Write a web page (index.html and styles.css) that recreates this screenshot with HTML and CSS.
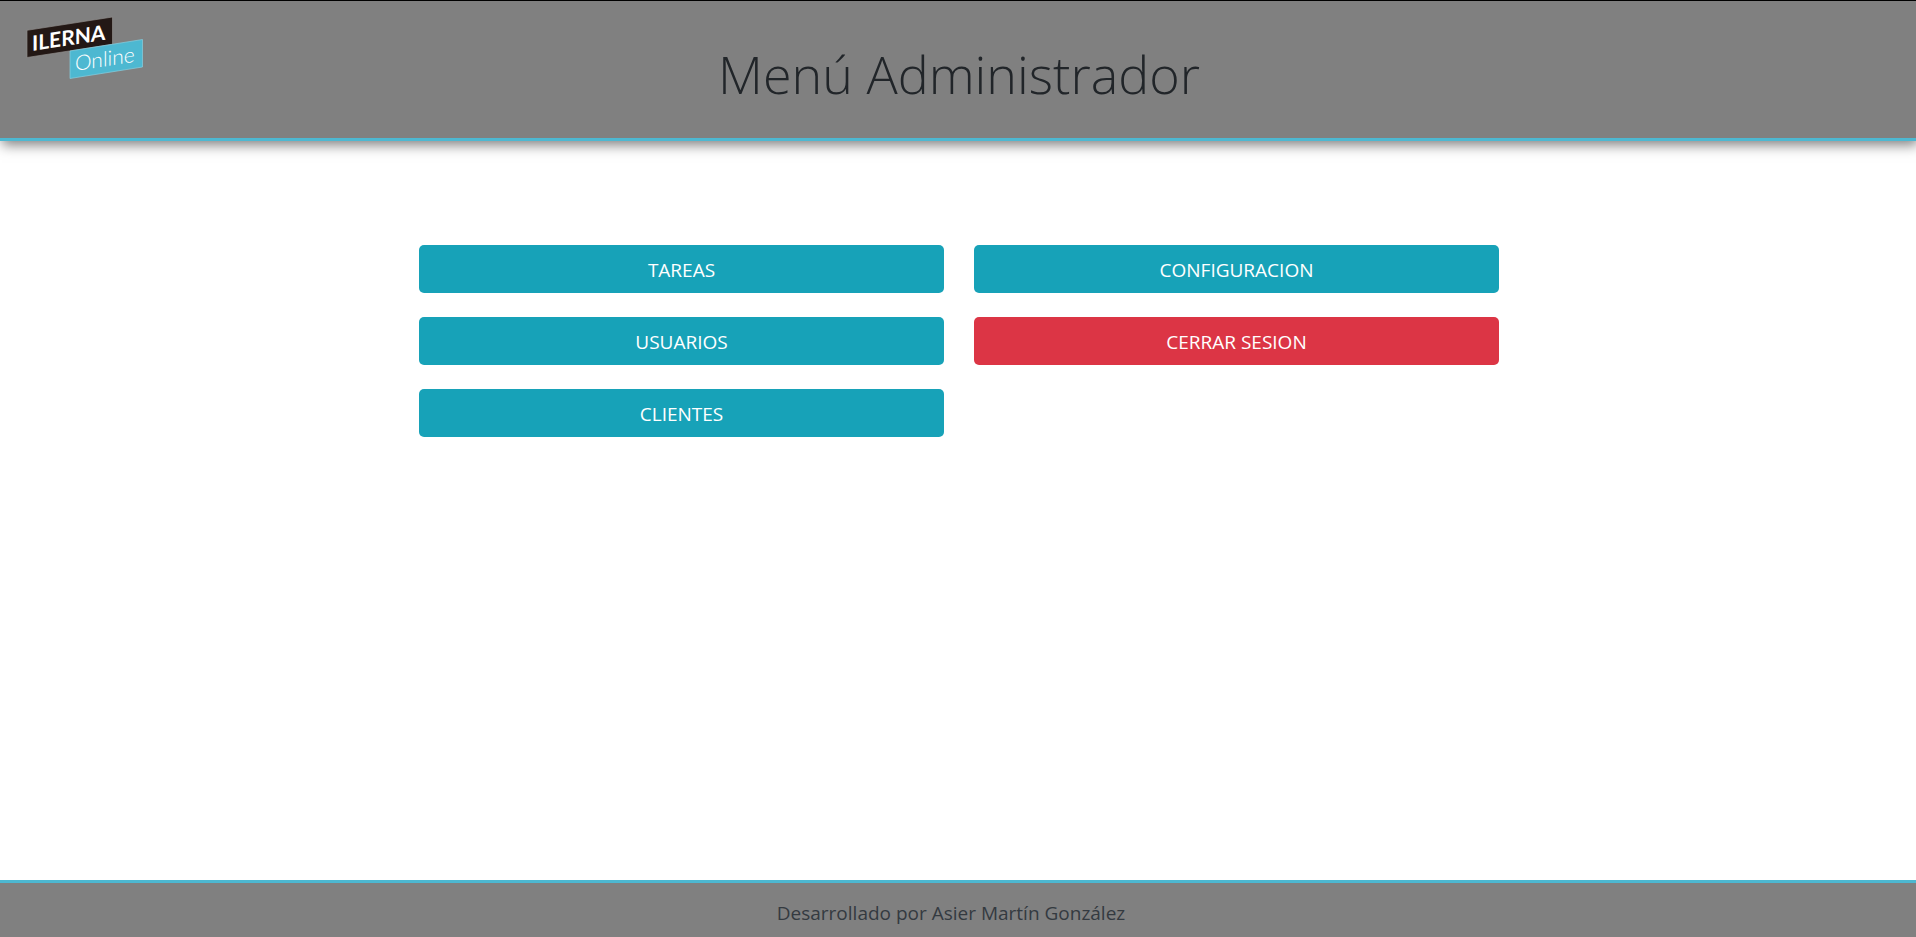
FILE: index.html
```html
<!DOCTYPE html>
<html lang="es">
<head>
<meta charset="utf-8">
<meta name="viewport" content="width=device-width, initial-scale=1">
<title>Menú Administrador</title>
<link rel="stylesheet" href="styles.css">
</head>
<body>
<header class="header">
  <svg class="logo" width="118" height="64" viewBox="26 16 118 64" role="img" aria-label="ILERNA Online">
    <path d="M27 30.3L112.5 17V44.3L27 57.5Z" fill="#231815" stroke="#8f8c8b" stroke-width=".7"/>
    <path d="M70 51L142.5 39.5V67L70 78.5Z" fill="#4db8d1" stroke="#86cfdf" stroke-width=".7"/>
    <g transform="translate(32 51) skewY(-8.8)"><text class="logo-name" x="0" y="0">ILERNA</text></g>
    <g transform="translate(75 71) skewY(-8.8)"><text class="logo-sub" x="0" y="0">Online</text></g>
  </svg>
  <h1 class="title">Menú Administrador</h1>
</header>
<main class="main">
  <nav class="menu">
    <div class="menu-column">
      <button class="btn" type="button">TAREAS</button>
      <button class="btn" type="button">USUARIOS</button>
      <button class="btn" type="button">CLIENTES</button>
    </div>
    <div class="menu-column">
      <button class="btn" type="button">CONFIGURACION</button>
      <button class="btn btn-danger" type="button">CERRAR SESION</button>
    </div>
  </nav>
</main>
<footer class="footer">Desarrollado por Asier Martín González</footer>
</body>
</html>
```
FILE: styles.css
```css
* {
  box-sizing: border-box;
}

body {
  margin: 0;
  min-height: 100vh;
  display: flex;
  flex-direction: column;
  background: #fff;
  color: #212529;
  font-family: "Segoe UI", "Open Sans", "Noto Sans", sans-serif;
}

.header {
  display: grid;
  grid-template-columns: 1fr auto 1fr;
  align-items: start;
  padding: 15px 24px 29px 26px;
  border-top: 1px solid #000;
  border-bottom: 3px solid #4db8d1;
  background: #808080;
  box-shadow: 2px 4px 12px rgba(0, 0, 0, 0.5);
}

.logo {
  display: block;
}

.logo-name,
.logo-sub {
  fill: #fff;
  font-family: Lato, sans-serif;
}

.logo-name {
  font-size: 21px;
  font-weight: 700;
}

.logo-sub {
  font-size: 21px;
  font-weight: 300;
}

.title {
  margin: 22px 0 0;
  font-size: 52px;
  font-weight: 300;
  line-height: 71px;
}

.main {
  flex: 1;
  padding: 104px 15px 24px 17px;
}

.menu {
  display: grid;
  grid-template-columns: 1fr 1fr;
  gap: 30px;
  max-width: 1080px;
  margin: 0 auto;
}

.menu-column {
  display: flex;
  flex-direction: column;
  gap: 24px;
}

.btn {
  padding: 10px 16px 8px;
  border: 0;
  border-radius: 5px;
  background: #17a2b8;
  color: #fff;
  font: inherit;
  font-size: 19px;
  line-height: 30px;
  cursor: pointer;
}

.btn-danger {
  background: #dc3545;
}

.footer {
  padding: 15px 22px 9px 8px;
  border-top: 3px solid #4db8d1;
  background: #808080;
  color: #343a40;
  font-size: 19px;
  line-height: 30px;
  text-align: center;
}
```
